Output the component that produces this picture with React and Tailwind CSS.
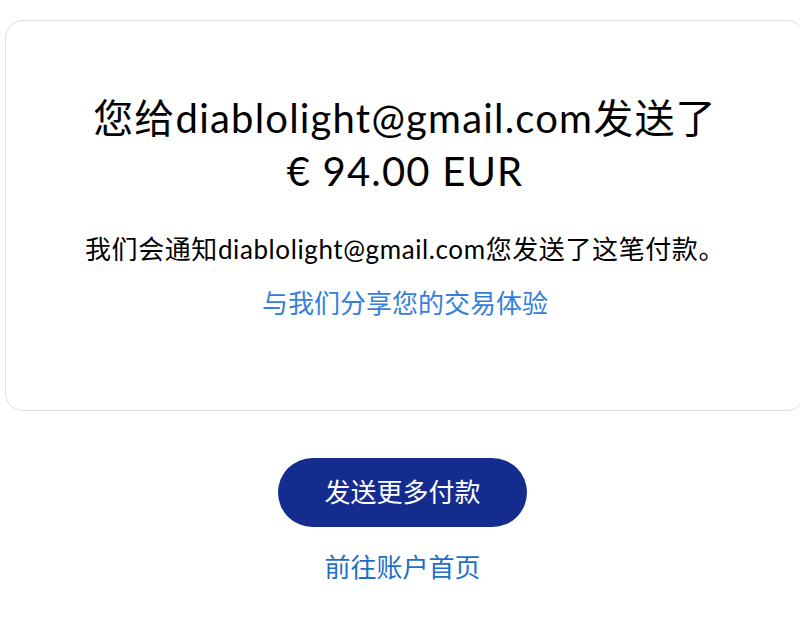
export default function App() {
  return (
    <div className="min-h-[620px] w-[800px] bg-white font-['Lato','Noto_Sans_CJK_SC',sans-serif] text-black">
      <div className="pl-[5px] pt-[20px]">
        <div className="flex h-[391px] w-[800px] flex-col items-center rounded-[18px] border border-[#dedede] pt-[71px]">
          <h1 className="text-center text-[40px] font-normal leading-[53px] tracking-[1.2px]">
            您给diablolight@gmail.com发送了
            <br />€ 94.00 EUR
          </h1>
          <p className="mt-[33px] text-[26px] leading-[36px] tracking-[0.6px]">
            我们会通知diablolight@gmail.com您发送了这笔付款。
          </p>
          <a className="mt-[18px] text-[26px] leading-[36px] text-[#3580dc]">与我们分享您的交易体验</a>
        </div>
      </div>
      <div className="flex flex-col items-center pl-[5px] pt-[47px]">
        <button className="h-[69px] w-[249px] rounded-full bg-[#142c8e] text-[26px] text-white">发送更多付款</button>
        <a className="mt-[22px] text-[26px] leading-[36px] text-[#1f6fc4]">前往账户首页</a>
      </div>
    </div>
  );
}
